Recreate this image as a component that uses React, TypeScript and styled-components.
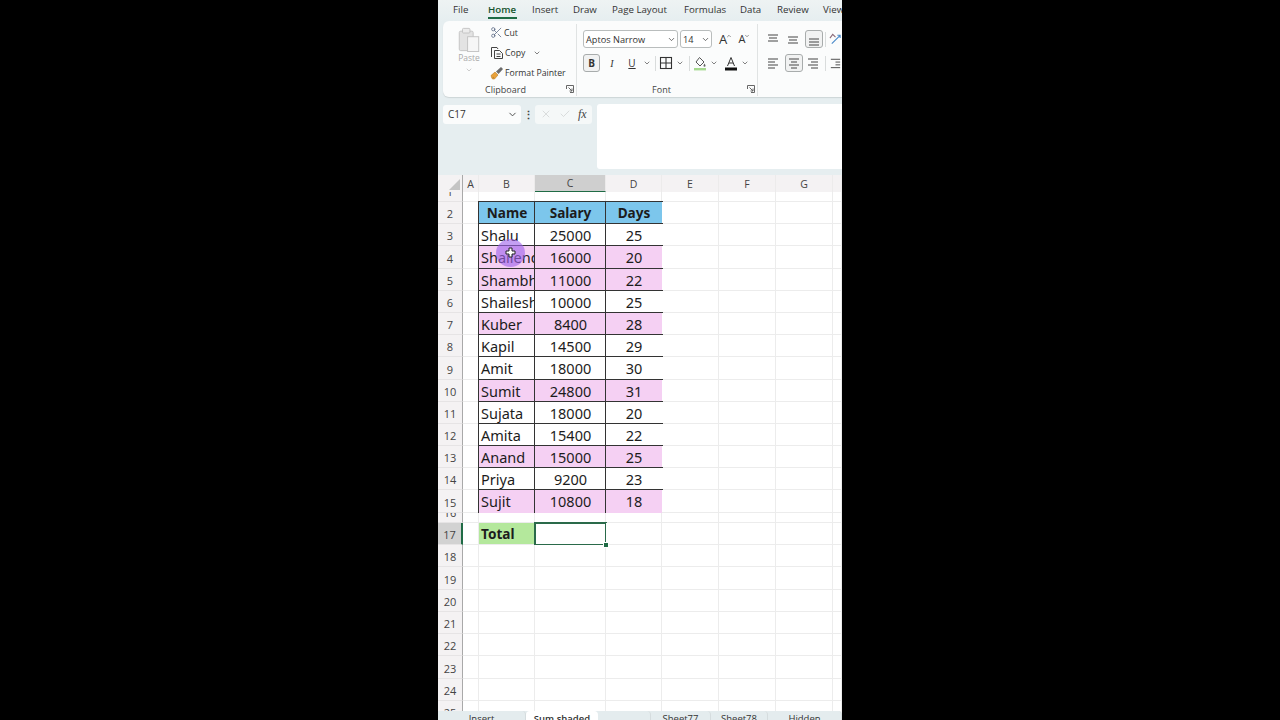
import React from "react";
import styled, { createGlobalStyle } from "styled-components";
import { Scissors, ChevronDown, Check, X, ChevronUp } from "lucide-react";

const Global = createGlobalStyle`
  html, body { margin: 0; padding: 0; background: #000; height: 100%; }
  #root { height: 100%; }
`;

const UI = `"Open Sans", "Noto Sans", sans-serif`;
const CELL = `"Noto Sans", "Open Sans", sans-serif`;

const Page = styled.div`
  width: 1280px; height: 720px; display: flex; justify-content: center; background: #000; overflow: hidden;
`;
const Frame = styled.div`
  width: 404px; height: 720px; background: #e6eef0; display: flex; flex-direction: column;
  overflow: hidden; position: relative; font-family: ${UI}; color: #2a2a2a; flex: none;
`;
const Tabs = styled.nav`
  height: 21px; display: flex; align-items: center; padding-left: 15px; font-size: 9.7px; white-space: nowrap;
  background: linear-gradient(#eef3f3, #e6eef0);
`;
const Tab = styled.span<{ $w: number; $active?: boolean }>`
  width: ${p => p.$w}px; flex: none; position: relative; height: 21px; line-height: 19px;
  color: ${p => (p.$active ? "#14532d" : "#333")}; font-weight: ${p => (p.$active ? 600 : 400)};
  ${p => p.$active && `&::after { content: ""; position: absolute; left: 0; width: 29px; bottom: 2px; height: 2px; background: #1f6b45; }`}
`;
const Ribbon = styled.section`
  height: 76px; margin-left: 5px; background: #fbfcfc; border-radius: 6px 0 0 6px; display: flex; flex: none;
  box-shadow: 0 1px 1px #cdd5d6;
`;
const Group = styled.div<{ $w: number }>`
  width: ${p => p.$w}px; flex: none; position: relative; border-right: 1px solid #e0e3e3; margin: 3px 0 1px; box-sizing: border-box;
  &:last-child { border-right: none; }
`;
const ClipboardBody = styled.div`
  display: flex; padding: 0 0 0 11px; gap: 6px; height: 60px;
`;
const PasteCol = styled.div`
  width: 30px; padding-top: 3px; display: flex; flex-direction: column; align-items: center; color: #a9a9a9; font-size: 8.5px; line-height: 12px;
  svg:last-child { margin-top: 2px; }
`;
const ClipRows = styled.div`display: flex; flex-direction: column; gap: 3px;`;
const ClipRow = styled.div`
  display: flex; align-items: center; gap: 1px; height: 17px; font-size: 8.7px; white-space: nowrap; color: #333;
`;
const GroupLabel = styled.div<{ $x: number }>`
  position: absolute; left: 0; bottom: 0; width: ${p => p.$x}px; text-align: center; font-size: 9px; line-height: 13px; color: #444;
`;
const Launcher = styled.svg`
  position: absolute; right: 2px; bottom: 3px; width: 8px; height: 8px;
`;
const FontBody = styled.div`
  padding: 6px 0 0 6px; display: flex; flex-direction: column; gap: 6px;
`;
const Row = styled.div`display: flex; align-items: center; height: 18px;`;
const Select = styled.div<{ $w: number }>`
  width: ${p => p.$w}px; height: 18px; box-sizing: border-box; border: 1px solid #b9bdbd; border-radius: 3px; background: #fff;
  font-size: 9.2px; display: flex; align-items: center; justify-content: space-between; padding: 0 1px 0 2px; margin-right: 2px; color: #333;
`;
const Grow = styled.span`
  font-size: 13px; color: #333; width: 20px; text-align: center; line-height: 18px; position: relative; margin-left: -1px;
`;
const Small = styled(Grow)`font-size: 11px;`;
const Fmt = styled.span<{ $w: number; $on?: boolean; $serif?: boolean; $under?: boolean; $bold?: boolean }>`
  width: ${p => p.$w}px; height: 18px; flex: none; box-sizing: border-box; display: flex; align-items: center; justify-content: center;
  font-size: 10px; border-radius: 3px; color: #333;
  font-family: ${p => (p.$serif ? `"Liberation Serif", serif` : UI)};
  font-style: ${p => (p.$serif ? "italic" : "normal")};
  font-weight: ${p => (p.$bold ? 700 : 400)};
  text-decoration: ${p => (p.$under ? "underline" : "none")};
  border: ${p => (p.$on ? "1px solid #a8acac" : "none")};
  background: ${p => (p.$on ? "#f1f2f2" : "transparent")};
`;
const Sep = styled.span`width: 1px; height: 15px; background: #d9dcdc; margin: 0 3px 0 2px; flex: none;`;
const AlignBody = styled.div`padding: 6px 0 0 5px; display: flex; flex-direction: column; gap: 6px;`;

const FormulaArea = styled.section`
  height: 65px; margin-top: 7px; padding-left: 5px; display: flex; flex: none;
`;
const NameRow = styled.div`display: flex; height: 20px; width: 154px; flex: none; align-items: center;`;
const NameBox = styled.div`
  width: 78px; height: 19px; box-sizing: border-box; background: #fbfcfc; border-radius: 3px; padding: 0 3px 0 5px; font-size: 10px;
  display: flex; align-items: center; justify-content: space-between; color: #333;
`;
const Dots = styled.span`width: 14px; text-align: center; font-size: 11px; font-weight: 700; color: #444; line-height: 19px;`;
const FxBox = styled.div`
  width: 57px; height: 19px; background: #f5f8f8; border-radius: 3px; display: flex; align-items: center; justify-content: space-around; padding: 0 2px; box-sizing: border-box; color: #c6c9c9;
`;
const Fx = styled.span`font-family: "Liberation Serif", serif; font-style: italic; font-size: 12px; color: #444;`;
const FormulaInput = styled.div`
  flex: 1; background: #fff; border-radius: 3px 0 0 3px; height: 65px;
`;

const Sheet = styled.div`
  margin-top: 6px; display: grid; flex: none; background: #fff;
  grid-template-columns: 25px 16px 56px 71px 56px 57px 57px 57px 9px;
  grid-template-rows: 17px 10px repeat(14, 22.2px) 10px repeat(9, 22.3px);
`;
const Corner = styled.div`
  background: #f4f2f3; border-right: 1px solid #a9a9a9; position: relative;
  &::after { content: ""; position: absolute; right: 2px; bottom: 2px; width: 0; height: 0;
    border-left: 11px solid transparent; border-bottom: 11px solid #c4c4c4; }
`;
const ColHead = styled.div<{ $sel?: boolean }>`
  background: ${p => (p.$sel ? "#cfcfcf" : "#f4f2f3")};
  border-bottom: ${p => (p.$sel ? "1px solid #1f6b45" : "none")};
  border-right: 1px solid #ecebeb;
  font-size: 10.5px; color: #444; display: flex; align-items: center; justify-content: center; box-sizing: border-box;
`;
const RowHead = styled.div<{ $sel?: boolean }>`
  background: ${p => (p.$sel ? "#d2d2d2" : "#f4f2f3")};
  border-right: ${p => (p.$sel ? "2px solid #1f6b45" : "1px solid #a9a9a9")};
  border-bottom: 1px solid #e6e4e5;
  font-size: 11px; line-height: 18px; color: #444; display: flex; align-items: flex-end; justify-content: center; box-sizing: border-box; overflow: hidden;
`;
const Cell = styled.div<{ $bg?: string; $boxed?: boolean; $center?: boolean; $bold?: boolean; $selected?: boolean }>`
  background: ${p => p.$bg || "#fff"};
  ${p => (p.$boxed ? "outline: 1px solid #333;" : "border-right: 1px solid #ececec; border-bottom: 1px solid #ececec;")}
  ${p => p.$selected && "outline: 2px solid #2a6a4a; outline-offset: -1px; border: none;"}
  box-sizing: border-box; overflow: hidden; white-space: nowrap; font-family: ${CELL};
  font-size: ${p => (p.$bold ? 13.6 : 14.5)}px; line-height: 22px; color: #1c1c1c; padding: 0 0 0 ${p => (p.$center ? 0 : 2)}px;
  text-align: ${p => (p.$center ? "center" : "left")}; font-weight: ${p => (p.$bold ? 700 : 400)};
`;
const Handle = styled.span`
  position: absolute; left: 165px; top: 542px; width: 4px; height: 4px; background: #1f6b45; border: 1px solid #fff; z-index: 3;
`;
const CursorHalo = styled.div`
  position: absolute; left: 58px; top: 239px; width: 29px; height: 28px; border-radius: 50%; background: rgba(160, 100, 235, 0.62); z-index: 4;
  display: flex; align-items: center; justify-content: center; padding-bottom: 2px; box-sizing: border-box; filter: blur(.4px);
`;
const SheetTabs = styled.div`
  position: absolute; left: 0; right: 0; top: 711px; height: 20px; background: #e4ecee; display: flex; font-size: 9.5px; color: #333; white-space: nowrap;
  box-sizing: border-box; border-radius: 0 4px 0 0;
`;
const SheetTab = styled.span<{ $w: number; $active?: boolean }>`
  width: ${p => p.$w}px; flex: none; box-sizing: border-box; text-align: center; line-height: 16px;
  background: ${p => (p.$active ? "#fff" : "transparent")};
  font-weight: ${p => (p.$active ? 600 : 400)};
  border-radius: 4px 4px 0 0;
  border-right: ${p => (p.$active ? "none" : "1px solid #d5dcde")};
`;

const Lines: React.FC<{ kind: "top" | "mid" | "bot" | "l" | "c" | "r" | "indent" }> = ({ kind }) => {
  const w = (x1: number, x2: number, y: number, k: number) => <line key={k} x1={x1} x2={x2} y1={y} y2={y} stroke="#444" strokeWidth="1" />;
  const ys = kind === "top" ? [3, 6, 9] : kind === "mid" ? [5, 8, 11] : kind === "bot" ? [7, 10, 13] : [3, 6, 9, 12];
  return (
    <svg width="14" height="14" viewBox="0 0 14 14">
      {ys.map((y, i) => {
        if (kind === "l") return w(2, i % 2 ? 9 : 12, y, i);
        if (kind === "r") return w(i % 2 ? 5 : 2, 12, y, i);
        if (kind === "c") return w(i % 2 ? 4 : 2, i % 2 ? 10 : 12, y, i);
        if (kind === "indent") return i === 0 || i === 3 ? w(2, 12, y, i) : w(7, 12, y, i);
        return w(i === 1 && kind !== "bot" ? 3 : 2, i === 1 && kind !== "bot" ? 11 : 12, y, i);
      })}
    </svg>
  );
};

const PasteIcon = () => (
  <svg width="24" height="25" viewBox="0 0 24 27" fill="none" stroke="#c2c2c2">
    <rect x="1.5" y="4.5" width="15" height="21" rx="1.5" fill="#e3e3e3" />
    <rect x="5" y="1.5" width="8" height="5" rx="1" fill="#ececec" />
    <rect x="10.5" y="10.5" width="12" height="16" fill="#f6f6f6" />
  </svg>
);
const CopyIcon = () => (
  <svg width="14" height="14" viewBox="0 0 14 14" fill="none" stroke="#444">
    <path d="M1.5 11V1.5H7L8 3" /><path d="M4.5 4.5H9.5L12.5 7.5V12.5H4.5Z" /><path d="M6.5 8H10.5M6.5 10.5H10.5" />
  </svg>
);
const BrushIcon = () => (
  <svg width="14" height="14" viewBox="0 0 14 14">
    <path d="M1 9.5 5 6l3 3-3.5 4H2.5L4 11l-2 1.5Z" fill="#e9a23b" stroke="#b97a20" strokeWidth=".6" />
    <path d="M6 5.5 11 1l2 2-4.5 5Z" fill="#6b6b6b" />
  </svg>
);
const BordersIcon = () => (
  <svg width="14" height="14" viewBox="0 0 14 14" fill="none" stroke="#333" strokeWidth="1.1">
    <rect x="1.5" y="1.5" width="11" height="11" /><path d="M7 1.5V12.5M1.5 7H12.5" />
  </svg>
);
const FillIcon = () => (
  <svg width="14" height="15" viewBox="0 0 14 15" fill="none">
    <path d="M6.5 1.5 11 6l-4 4-4-4Z" stroke="#555" /><path d="M11.5 7.5c.8 1.2 1 1.8 1 2.2a1 1 0 0 1-2 0c0-.4.3-1 1-2.2Z" fill="#666" />
    <rect x="1" y="12" width="12" height="2.4" fill="#a6d98f" />
  </svg>
);
const ColorIcon = () => (
  <svg width="14" height="15" viewBox="0 0 14 15" fill="none" stroke="#333">
    <path d="M3.5 10 7 1.5 10.5 10M5 7h4" /><rect x="1" y="11.5" width="12" height="3" fill="#111" stroke="none" />
  </svg>
);
const OrientIcon = () => (
  <svg width="14" height="14" viewBox="0 0 14 14" fill="none" stroke="#4a8ac9" strokeWidth="1.2">
    <path d="M3 12 12 3M9 3h3v3" /><path d="M1 6 4 2l3 3" stroke="#8a6a78" />
  </svg>
);
const LauncherIcon = () => (
  <Launcher viewBox="0 0 8 8" fill="none" stroke="#666">
    <path d="M.5 4V.5H7.5V7.5H4" /><path d="M2.5 2.5 6 6M6 3.5V6H3.5" />
  </Launcher>
);
const Caret = ({ s = 9, c = "#444" }: { s?: number; c?: string }) => <ChevronDown size={s} color={c} strokeWidth={2} />;
const CursorPlus = () => (
  <svg width="11" height="11" viewBox="0 0 11 11">
    <path d="M4 1h3v3h3v3H7v3H4V7H1V4h3Z" fill="#fff" stroke="#222" strokeWidth="1" />
  </svg>
);

const people: [string, number, number, boolean][] = [
  ["Shalu", 25000, 25, false],
  ["Shailendra", 16000, 20, true],
  ["Shambhu", 11000, 22, true],
  ["Shailesh", 10000, 25, false],
  ["Kuber", 8400, 28, true],
  ["Kapil", 14500, 29, false],
  ["Amit", 18000, 30, false],
  ["Sumit", 24800, 31, true],
  ["Sujata", 18000, 20, false],
  ["Amita", 15400, 22, false],
  ["Anand", 15000, 25, true],
  ["Priya", 9200, 23, false],
  ["Sujit", 10800, 18, true],
];
const PINK = "#f5d0f3";
const BLUE = "#7cc6ec";
const GREEN = "#b4e89c";

const Blank: React.FC<{ n: number }> = ({ n }) => (
  <>
    {Array.from({ length: n }, (_, i) => <Cell key={i} />)}
  </>
);

export default function App() {
  return (
    <Page>
      <Global />
      <Frame>
        <Tabs>
          <Tab $w={35}>File</Tab>
          <Tab $w={44} $active>Home</Tab>
          <Tab $w={41}>Insert</Tab>
          <Tab $w={39}>Draw</Tab>
          <Tab $w={72}>Page Layout</Tab>
          <Tab $w={56}>Formulas</Tab>
          <Tab $w={37}>Data</Tab>
          <Tab $w={46}>Review</Tab>
          <Tab $w={30}>View</Tab>
        </Tabs>
        <Ribbon>
          <Group $w={134}>
            <ClipboardBody>
              <PasteCol>
                <PasteIcon />
                <span>Paste</span>
                <ChevronDown size={8} color="#b5b5b5" />
              </PasteCol>
              <ClipRows>
                <ClipRow><Scissors size={13} color="#4a5a78" strokeWidth={1.3} /><span>Cut</span></ClipRow>
                <ClipRow><CopyIcon /><span>Copy</span><Fmt $w={22}><Caret s={8} /></Fmt></ClipRow>
                <ClipRow><BrushIcon /><span>Format Painter</span></ClipRow>
              </ClipRows>
            </ClipboardBody>
            <GroupLabel $x={125}>Clipboard</GroupLabel>
            <LauncherIcon />
          </Group>
          <Group $w={181}>
            <FontBody>
              <Row>
                <Select $w={95}>Aptos Narrow<Caret /></Select>
                <Select $w={32}>14<Caret /></Select>
                <Grow>A<ChevronUp size={6} style={{ position: "absolute", top: 3, right: 1 }} /></Grow>
                <Small>A<ChevronDown size={6} style={{ position: "absolute", top: 3, right: 2 }} /></Small>
              </Row>
              <Row>
                <Fmt $w={17} $on $bold>B</Fmt>
                <Fmt $w={24} $serif>I</Fmt>
                <Fmt $w={16} $under>U</Fmt>
                <Fmt $w={13}><Caret s={8} /></Fmt>
                <Sep />
                <BordersIcon />
                <Fmt $w={14}><Caret s={8} /></Fmt>
                <Sep />
                <FillIcon />
                <Fmt $w={14}><Caret s={8} /></Fmt>
                <Fmt $w={3} />
                <ColorIcon />
                <Fmt $w={14}><Caret s={8} /></Fmt>
              </Row>
            </FontBody>
            <GroupLabel $x={169}>Font</GroupLabel>
            <LauncherIcon />
          </Group>
          <Group $w={84}>
            <AlignBody>
              <Row>
                <Fmt $w={20}><Lines kind="top" /></Fmt>
                <Fmt $w={20}><Lines kind="mid" /></Fmt>
                <Fmt $w={2} />
                <Fmt $w={18} $on><Lines kind="bot" /></Fmt>
                <Sep />
                <OrientIcon />
              </Row>
              <Row>
                <Fmt $w={20}><Lines kind="l" /></Fmt>
                <Fmt $w={2} />
                <Fmt $w={18} $on><Lines kind="c" /></Fmt>
                <Fmt $w={20}><Lines kind="r" /></Fmt>
                <Sep />
                <Lines kind="indent" />
              </Row>
            </AlignBody>
          </Group>
        </Ribbon>
        <FormulaArea>
          <NameRow>
            <NameBox>C17<Caret s={11} /></NameBox>
            <Dots>⋮</Dots>
            <FxBox>
              <X size={12} strokeWidth={1.2} color="#c6c9c9" />
              <Check size={12} strokeWidth={1.2} color="#c6c9c9" />
              <Fx>fx</Fx>
            </FxBox>
          </NameRow>
          <FormulaInput />
        </FormulaArea>
        <Sheet>
          <Corner />
          {["A", "B", "C", "D", "E", "F", "G"].map(c => <ColHead key={c} $sel={c === "C"}>{c}</ColHead>)}
          <ColHead />

          <RowHead>1</RowHead>
          <Blank n={8} />

          <RowHead>2</RowHead>
          <Cell />
          <Cell $boxed $bg={BLUE} $center $bold>Name</Cell>
          <Cell $boxed $bg={BLUE} $center $bold>Salary</Cell>
          <Cell $boxed $bg={BLUE} $center $bold>Days</Cell>
          <Blank n={4} />

          {people.map(([name, sal, days, pink], i) => {
            const bg = pink ? PINK : undefined;
            return (
              <React.Fragment key={name}>
                <RowHead>{i + 3}</RowHead>
                <Cell />
                <Cell $boxed $bg={bg}>{name}</Cell>
                <Cell $boxed $bg={bg} $center>{sal}</Cell>
                <Cell $boxed $bg={bg} $center>{days}</Cell>
                <Blank n={4} />
              </React.Fragment>
            );
          })}

          <RowHead>16</RowHead>
          <Blank n={8} />

          <RowHead $sel>17</RowHead>
          <Cell />
          <Cell $bg={GREEN} $bold>Total</Cell>
          <Cell $selected />
          <Blank n={5} />

          {[18, 19, 20, 21, 22, 23, 24, 25].map(n => (
            <React.Fragment key={n}>
              <RowHead>{n}</RowHead>
              <Blank n={8} />
            </React.Fragment>
          ))}
        </Sheet>
        <CursorHalo><CursorPlus /></CursorHalo>
        <Handle />
        <SheetTabs>
          <SheetTab $w={88}>Insert</SheetTab>
          <SheetTab $w={72} $active>Sum shaded</SheetTab>
          <SheetTab $w={53} />
          <SheetTab $w={60}>Sheet77</SheetTab>
          <SheetTab $w={57}>Sheet78</SheetTab>
          <SheetTab $w={74}>Hidden</SheetTab>
        </SheetTabs>
      </Frame>
    </Page>
  );
}
